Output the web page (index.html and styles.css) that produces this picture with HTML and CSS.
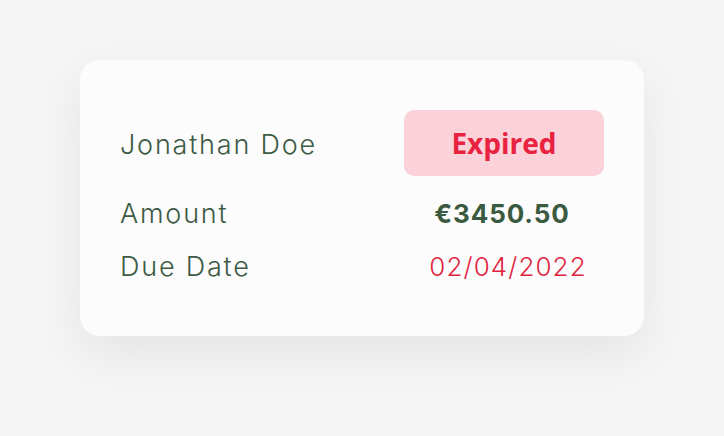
FILE: index.html
```html
<!DOCTYPE html>
<html lang="en">
<head>
<meta charset="utf-8">
<title>Invoice</title>
<link rel="stylesheet" href="styles.css">
</head>
<body>
  <div class="card">
    <div class="row row-head">
      <div class="label label-name">Jonathan Doe</div>
      <div class="value"><span class="badge">Expired</span></div>
    </div>
    <div class="row row-amount">
      <div class="label">Amount</div>
      <div class="value amount">€3450.50</div>
    </div>
    <div class="row row-date">
      <div class="label">Due Date</div>
      <div class="value date">02/04/2022</div>
    </div>
  </div>
</body>
</html>
```

FILE: styles.css
```css
html, body {
  margin: 0;
  padding: 0;
}
body {
  background: #f5f5f5;
  font-family: Inter, "DejaVu Sans", sans-serif;
  width: 724px;
  height: 436px;
  padding-top: 60px;
  box-sizing: border-box;
}
.card {
  width: 564px;
  height: 276px;
  margin: 0 auto;
  box-sizing: border-box;
  background: #fcfcfc;
  border-radius: 20px;
  box-shadow: 0 18px 50px rgba(0, 0, 0, 0.07);
  padding: 50px 40px 0 40px;
  display: flex;
  flex-direction: column;
}
.row {
  display: grid;
  grid-template-columns: 1fr 200px;
  align-items: center;
}
.row-head { height: 66px; }
.row-amount { height: 38px; margin-top: 19px; }
.row-date { height: 38px; margin-top: 15px; }
.label {
  color: #3d5a45;
  font-size: 27px;
  font-weight: 300;
  letter-spacing: 1.8px;
  line-height: 38px;
}
.label-name {
  padding-top: 3px;
}
.value {
  text-align: center;
  line-height: 38px;
}
.badge {
  display: flex;
  align-items: center;
  justify-content: center;
  height: 66px;
  border-radius: 10px;
  background: #fbd2d9;
  color: #e8223f;
  font-family: "Open Sans", sans-serif;
  font-weight: 700;
  font-size: 28px;
}
.amount {
  color: #3a5a40;
  font-size: 26px;
  font-weight: 700;
  letter-spacing: 0.9px;
  padding-right: 4px;
}
.date {
  color: #e0243f;
  font-size: 26px;
  font-weight: 300;
  letter-spacing: 1.1px;
  padding-left: 8px;
}
```
